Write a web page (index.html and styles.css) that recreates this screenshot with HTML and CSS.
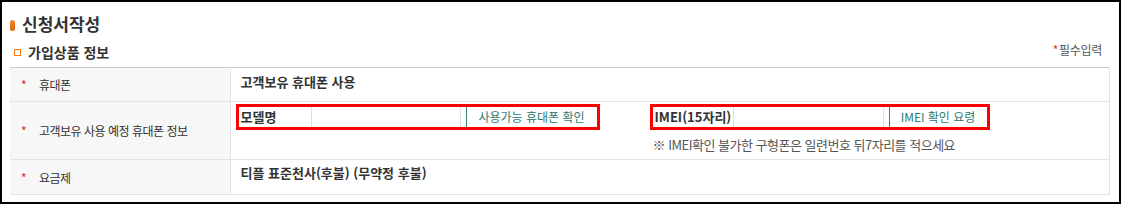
FILE: index.html
```html
<!DOCTYPE html>
<html lang="ko">
<head>
    <meta charset="UTF-8">
    <title>신청서작성</title>
    <link rel="stylesheet" href="styles.css">
</head>
<body>
<div class="page">
    <h1 class="title"><span class="pill"></span>신청서작성</h1>
    <div class="sub-head">
        <h2 class="sub-title"><span class="box"></span>가입상품 정보</h2>
        <span class="req"><em>*</em>필수입력</span>
    </div>

    <table class="form-table">
        <tr class="row1">
            <th><em>*</em>휴대폰</th>
            <td class="top">고객보유 휴대폰 사용</td>
        </tr>
        <tr class="row2">
            <th><em>*</em>고객보유 사용 예정 휴대폰 정보</th>
            <td class="top">
                <div class="groups">
                    <div class="group model">
                        <span class="g-label">모델명</span>
                        <span class="g-input"></span>
                        <button class="g-btn">사용가능 휴대폰 확인</button>
                    </div>
                    <div class="imei-wrap">
                        <div class="group imei">
                            <span class="g-label">IMEI(15자리)</span>
                            <span class="g-input"></span>
                            <button class="g-btn">IMEI 확인 요령</button>
                        </div>
                        <p class="note">※ IMEI확인 불가한 구형폰은 일련번호 뒤7자리를 적으세요</p>
                    </div>
                </div>
            </td>
        </tr>
        <tr class="row3">
            <th><em>*</em>요금제</th>
            <td class="top">티플 표준천사(후불) (무약정 후불)</td>
        </tr>
    </table>
</div>
</body>
</html>
```

FILE: styles.css
```css
body {
    margin: 0;
    font-family: "Noto Sans CJK KR", "Noto Sans", sans-serif;
    color: #333;
    background: #fff;
}
.page {
    height: 204px;
    box-sizing: border-box;
    border: 2px solid #000;
    padding: 0 9px 0 8px;
}
.title {
    margin: 0;
    padding-top: 9px;
    height: 26px;
    font-size: 17px;
    font-weight: bold;
    line-height: 22px;
    color: #333;
    display: flex;
    align-items: center;
}
.title .pill {
    display: inline-block;
    width: 5px;
    height: 11px;
    border-radius: 3px;
    background: linear-gradient(#f08a2c, #dd6608);
    margin: 3px 7px 0 0;
}
.sub-head {
    display: flex;
    justify-content: space-between;
    align-items: center;
    height: 30px;
}
.sub-title {
    margin: 0;
    font-size: 14px;
    font-weight: bold;
    display: flex;
    align-items: center;
    padding-left: 4px;
}
.sub-title .box {
    display: inline-block;
    width: 5px;
    height: 5px;
    border: 1px solid #f07a10;
    margin: 1px 7px 0 0;
}
.req {
    font-size: 12px;
    color: #555;
    padding-right: 8px;
    margin-top: -6px;
    letter-spacing: -0.3px;
}
.req em {
    font-style: normal;
    color: #d33;
    margin-right: 1px;
}
.form-table {
    width: 1100px;
    border-collapse: collapse;
    border-top: 1px solid #c5cccc;
    border-right: 1px solid #e3e3e3;
}
.form-table th,
.form-table td {
    border-bottom: 1px solid #e3e3e3;
    padding: 0;
}
.form-table th {
    width: 220px;
    background: #f7f7f7;
    border-right: 1px solid #e3e3e3;
    text-align: left;
    font-size: 12px;
    font-weight: normal;
    letter-spacing: -0.5px;
    padding-left: 11px;
    box-sizing: border-box;
}
.form-table th em {
    font-style: normal;
    color: #d22;
    display: inline-block;
    width: 18px;
}
.form-table td.top {
    vertical-align: top;
    font-size: 13px;
    font-weight: bold;
    padding: 4px 0 0 10px;
}
.row1 { height: 34px; }
.row2 { height: 58px; }
.row3 { height: 35px; }
.row3 td.top { padding-top: 3px; }
.row2 td.top { padding: 2px 0 0 5px; }
.groups {
    display: flex;
    gap: 50px;
}
.group {
    display: flex;
    height: 20px;
    border: 3px solid #f00;
    align-items: stretch;
}
.g-label {
    font-weight: bold;
    font-size: 13px;
    line-height: 20px;
    padding-left: 2px;
    border-right: 1px solid #ddd;
}
.g-input {
    border-right: 1px solid #e0e0e0;
    margin-right: 5px;
}
.g-btn {
    font-family: inherit;
    font-size: 12px;
    color: #2b7a70;
    background: #fff;
    border: 0;
    border-left: 1px solid #3f7f76;
    padding: 0;
    line-height: 20px;
}
.model .g-label { width: 70px; }
.model .g-input { width: 148px; }
.model .g-btn { width: 131px; }
.imei .g-label { width: 78px; }
.imei .g-input { width: 149px; }
.imei .g-btn { width: 98px; }
.note {
    margin: 5px 0 0 3px;
    font-size: 13px;
    font-weight: normal;
    letter-spacing: -0.5px;
    color: #555;
}
```
